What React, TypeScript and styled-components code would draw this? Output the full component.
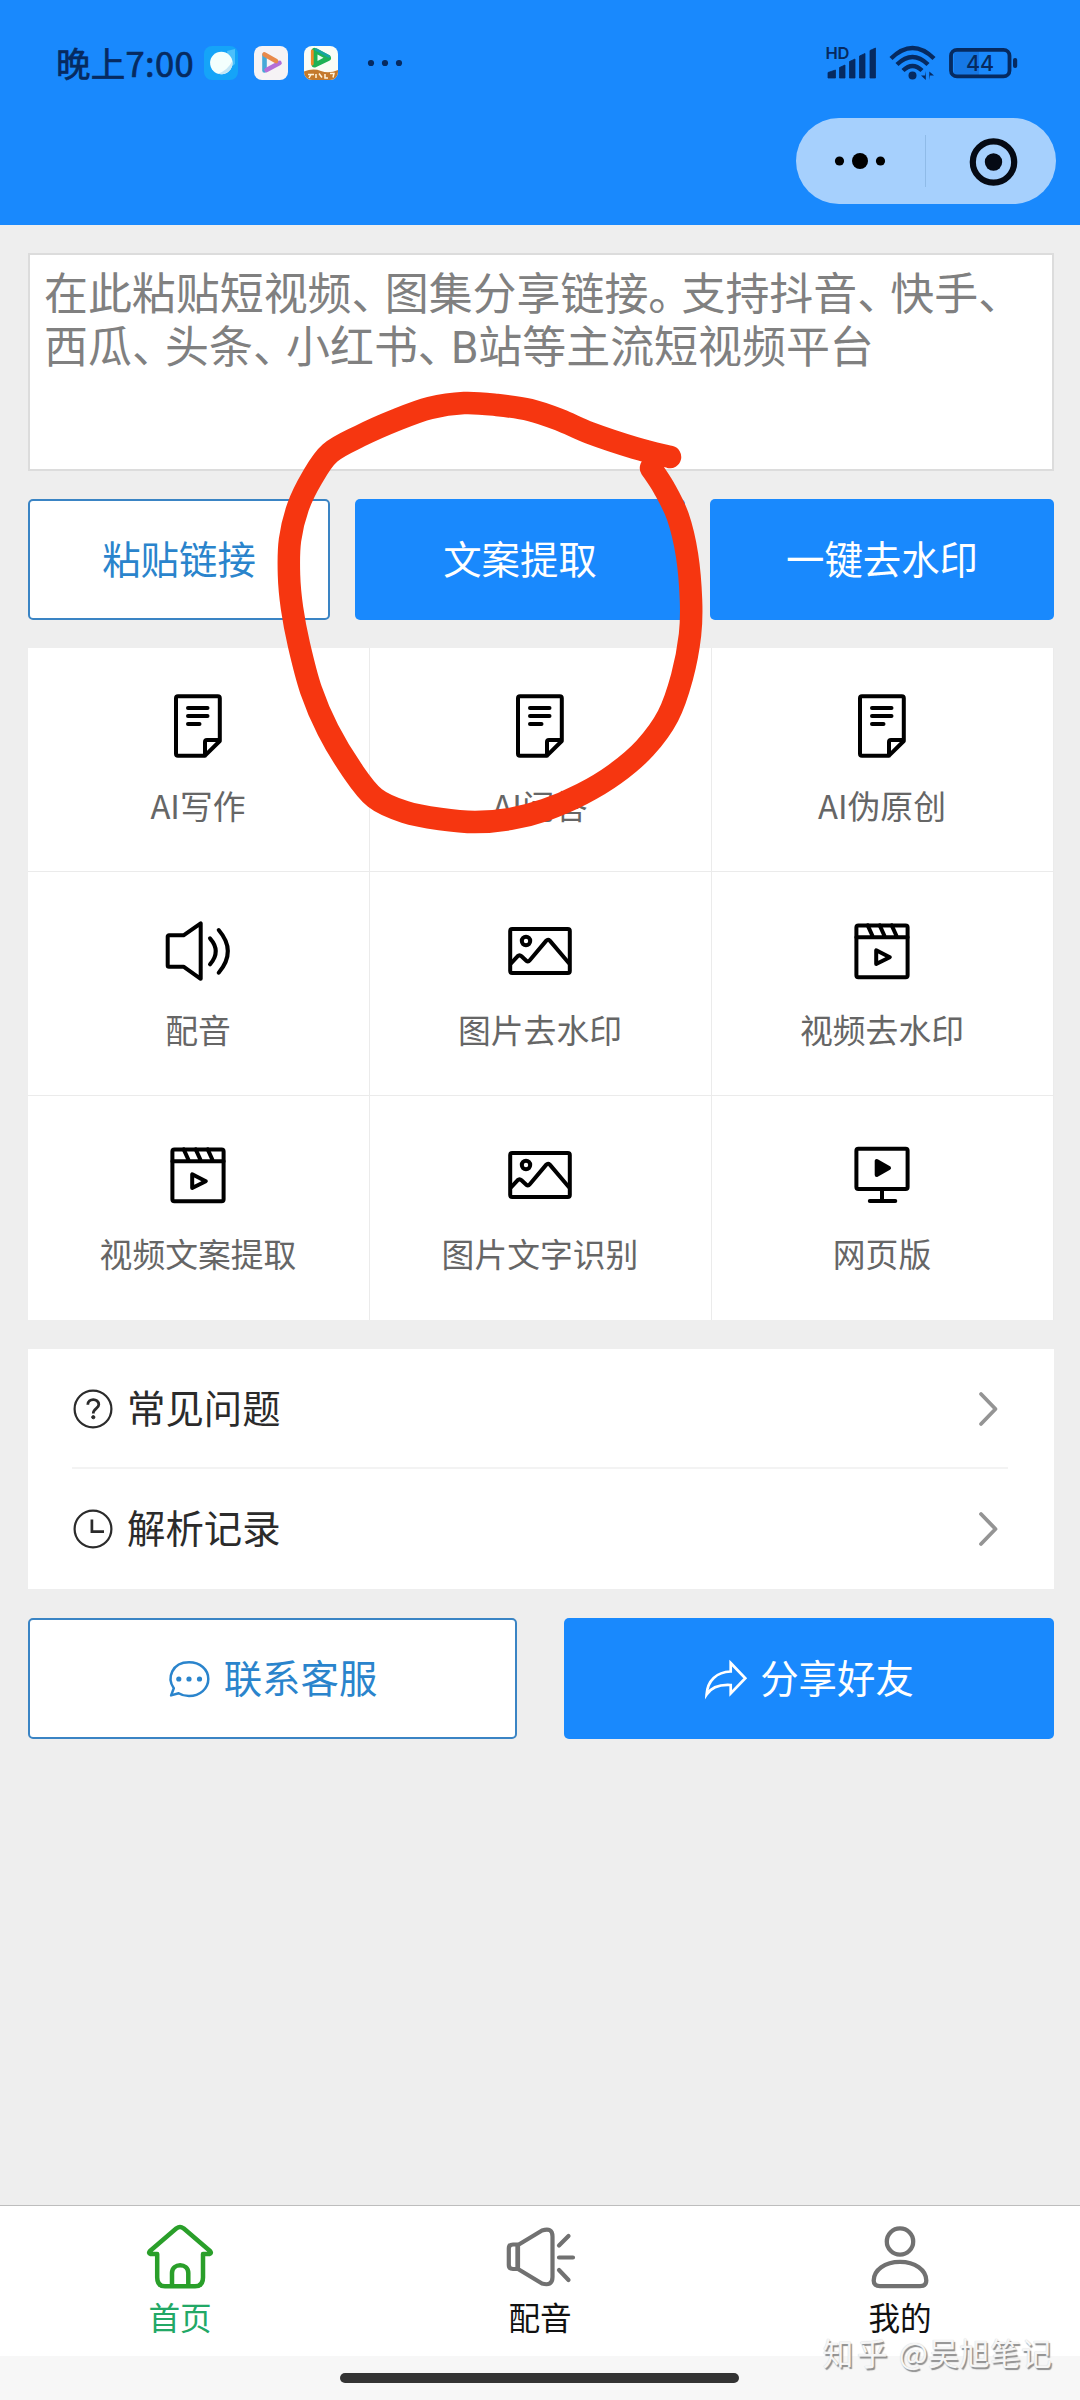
import React from 'react';
import styled, { createGlobalStyle, css } from 'styled-components';

const BLUE = '#1989fd';
const NAVY = '#062a60';

const GlobalStyle = createGlobalStyle`
  * { box-sizing: border-box; }
  body { margin: 0; background: #eeeeee; }
  svg { display: block; flex: none; overflow: visible; }
`;

const Screen = styled.div`
  position: relative;
  width: 1080px;
  height: 2400px;
  display: flex;
  flex-direction: column;
  overflow: hidden;
  background: #eeeeee;
  font-family: 'Noto Sans CJK SC', 'Noto Sans', sans-serif;
`;

const Header = styled.header`
  height: 225px;
  flex: none;
  background: ${BLUE};
  display: flex;
  flex-direction: column;
`;

const StatusBar = styled.div`
  height: 118px;
  padding: 40px 61px 0 56px;
  display: flex;
  align-items: flex-start;
  justify-content: space-between;
  color: ${NAVY};
`;

const StatusGroup = styled.div<{ $gap: number }>`
  display: flex;
  align-items: center;
  height: 46px;
  gap: ${(p) => p.$gap}px;
`;

const Clock = styled.span`
  width: 148px;
  margin: -3px -16px 0 0;
  font-size: 34.5px;
  line-height: 46px;
  letter-spacing: 0.3px;
  -webkit-text-stroke: 0.7px ${NAVY};
  white-space: nowrap;
`;

const Overflow = styled.div`
  margin-left: 13px;
`;

const Capsule = styled.div`
  align-self: flex-end;
  width: 260px;
  height: 86px;
  margin-right: 24.5px;
  border-radius: 43px;
  background: #a6d0fd;
  display: flex;
  align-items: center;
`;

const CapsuleHalf = styled.div`
  flex: 1;
  display: flex;
  justify-content: center;
`;

const CapsuleRule = styled.div`
  width: 1px;
  height: 52px;
  background: #8fbbe8;
`;

const Main = styled.main`
  flex: 1;
  padding: 28px 26px 0 28px;
  display: flex;
  flex-direction: column;
`;

const LinkInput = styled.div`
  height: 218px;
  padding: 14px 14px 0;
  border: 2px solid #dcdcdc;
  background: #fff;
  color: #808080;
  font-family: Roboto, 'Noto Sans CJK SC', sans-serif;
  font-size: 43.95px;
  line-height: 53.3px;
  white-space: nowrap;
`;

const Punct = styled.span`
  letter-spacing: -10.8px;
`;

const ButtonRow = styled.div<{ $gap: number; $top: number }>`
  display: flex;
  gap: ${(p) => p.$gap}px;
  margin-top: ${(p) => p.$top}px;
`;

const Button = styled.button<{ $filled?: boolean; $width: number }>`
  width: ${(p) => p.$width}px;
  height: 121px;
  padding: 0;
  display: flex;
  align-items: center;
  justify-content: center;
  gap: 14px;
  border-radius: 5px;
  font: inherit;
  font-size: 38.4px;
  ${(p) =>
    p.$filled
      ? css`
          border: 0;
          background: ${BLUE};
          color: #fff;
        `
      : css`
          border: 2px solid #3a84c4;
          background: #fff;
          color: #2a84cc;
        `}
`;

const ButtonText = styled.span`
  margin-top: -6px;
`;

const Grid = styled.div`
  margin-top: 28px;
  display: grid;
  grid-template-columns: repeat(3, 342px);
  grid-auto-rows: 224px;
  background: #fff;
`;

const Cell = styled.div`
  display: flex;
  flex-direction: column;
  align-items: center;
  padding: 45px 1px 0 0;
  border-right: 1px solid #ebebeb;
  border-bottom: 1px solid #ebebeb;
  &:nth-child(n + 7) { border-bottom: 0; }
`;

const CellLabel = styled.span`
  margin-top: 24px;
  font-size: 32.8px;
  line-height: 44px;
  color: #666;
`;

const List = styled.div`
  margin-top: 29px;
  padding: 0 46px 0 44px;
  background: #fff;
`;

const ListRow = styled.div`
  height: 120px;
  padding: 1px 10px 0 1px;
  display: flex;
  align-items: center;
  border-bottom: 2px solid #f3f3f3;
  &:last-child { border-bottom-color: #fff; }
`;

const ListLabel = styled.span`
  flex: 1;
  margin: -5px 0 0 14px;
  font-size: 38.4px;
  line-height: 50px;
  color: #2b2b2b;
`;

const TabBar = styled.nav`
  height: 151px;
  flex: none;
  display: flex;
  background: #fff;
  border-top: 1px solid #bdbdbd;
`;

const Tab = styled.div<{ $active?: boolean }>`
  flex: 1;
  display: flex;
  flex-direction: column;
  align-items: center;
  padding-top: 16px;
  font-size: 31.6px;
  line-height: 42px;
  color: ${(p) => (p.$active ? '#22a866' : '#111')};
`;

const TabLabel = styled.span`
  margin-top: 3px;
`;

const GestureArea = styled.footer`
  height: 44px;
  flex: none;
  padding: 17px 1px 0 0;
  background: #f7f7f7;
  display: flex;
  justify-content: center;
`;

const GestureBar = styled.div`
  width: 399px;
  height: 10px;
  border-radius: 5px;
  background: #333;
`;

const Watermark = styled.div`
  position: absolute;
  right: 28px;
  bottom: 26px;
  font-size: 30.8px;
  line-height: 44px;
  color: #f6f6f6;
  text-shadow: 1.5px 1.5px 1px #8d8d8d, 0 0 1px #ccc;
  white-space: nowrap;
`;

const SiteName = styled.span`
  letter-spacing: 3.3px;
`;

const Handle = styled.span`
  margin-left: 1px;
  letter-spacing: 0.2px;
`;

const Marker = styled.svg`
  position: absolute;
  left: 0;
  top: 0;
  pointer-events: none;
`;

type Kind = 'note' | 'sound' | 'picture' | 'clapper' | 'monitor';

const CellIcon = ({ kind }: { kind: Kind }) => (
  <svg width="66" height="66" viewBox="0 0 66 66" fill="none" stroke="#000" strokeWidth="4" strokeLinecap="round" strokeLinejoin="round">
    {kind === 'note' && (
      <>
        <path d="M40 62.7H13a2 2 0 0 1-2-2V5.2a2 2 0 0 1 2-2H52.8a2 2 0 0 1 2 2V48L40 62.7V49a2 2 0 0 1 2-2H54.8" />
        <path d="M23 15H42.5M23 23H42.5M23 31H34.5" />
      </>
    )}
    {kind === 'sound' && (
      <>
        <path d="M4 18.3H18.5L35.7 6.3V61.8L18.5 49.7H4a1.3 1.3 0 0 1-1.3-1.3V19.6A1.3 1.3 0 0 1 4 18.3Z" />
        <path d="M45 21.3Q56.5 34.3 45 47.3M53.7 13Q72 34.3 53.7 55.7" />
      </>
    )}
    {kind === 'picture' && (
      <>
        <rect x="3.2" y="12.1" width="59.6" height="43.8" rx="2" />
        <circle cx="19" cy="24" r="4.2" />
        <path d="M4 46.3L10.5 39.3Q12.5 37.4 14.5 39.3L19.3 43.8Q21.2 45.2 22.8 43.3L39.3 23.6Q41 21.8 42.8 23.6L62 46.3" />
      </>
    )}
    {kind === 'clapper' && (
      <>
        <rect x="7.4" y="8.4" width="51.2" height="51.8" rx="2" />
        <path d="M7.4 20.3H58.6M18.7 8.4L24 20M30.7 8.4L36 20M42.7 8.4L48 20M27.2 33.3V47L40.8 40.2Z" />
      </>
    )}
    {kind === 'monitor' && (
      <>
        <rect x="7.4" y="7.8" width="51.2" height="40.2" rx="2" />
        <path d="M33 48V60M20.8 60H46.3" />
        <path d="M27.7 20V34L40 27Z" fill="#000" />
      </>
    )}
  </svg>
);

const HelpIcon = () => (
  <svg width="40" height="40" viewBox="0 0 40 40" fill="none" stroke="#2b2b2b" strokeWidth="2.2">
    <circle cx="20" cy="20" r="18.4" />
    <path d="M14.8 15.8C14.8 8.9 25.8 9 25.8 15.6C25.8 19.6 20.3 19.4 20.3 24.6" strokeWidth="2.8" />
    <circle cx="20.3" cy="28.2" r="1.6" fill="#2b2b2b" strokeWidth="1" />
  </svg>
);

const ClockIcon = () => (
  <svg width="40" height="40" viewBox="0 0 40 40" fill="none" stroke="#2b2b2b" strokeWidth="2.2">
    <circle cx="20" cy="20" r="18.4" />
    <path d="M18.9 10.5V22.7H31" strokeWidth="2.7" />
  </svg>
);

const Chevron = () => (
  <svg width="20" height="36" viewBox="0 0 20 36" fill="none" stroke="#949494" strokeWidth="3.8" strokeLinecap="round" strokeLinejoin="round">
    <path d="M3 3L17.500 18L3 33" />
  </svg>
);

const ChatIcon = () => (
  <svg width="42" height="38" viewBox="0 0 42 38" fill="none" stroke="#2a84cc" strokeWidth="2.5" strokeLinejoin="round">
    <path d="M3.1 35.4L5.8 28.2C-1.5 18 4 2.2 21 2.2C32 2.2 40.3 9.4 40.3 19C40.3 28.5 32 36 21 36C17 36 13.500 35 10.600 33.200Z" />
    <g fill="#2a84cc" stroke="none">
      <circle cx="10.800" cy="19" r="2.600" />
      <circle cx="21" cy="19" r="2.600" />
      <circle cx="31.500" cy="19" r="2.600" />
    </g>
  </svg>
);

const ShareIcon = () => (
  <svg width="42" height="38" viewBox="0 0 42 38" fill="none" stroke="#fff" strokeWidth="2.700">
    <path d="M26.700 3L41.300 18.200L26.700 33.500V25C15 24.300 7.500 27 2.600 34.500C3.500 20.500 12.500 12 26.700 11.500Z" />
  </svg>
);

const BrowserApp = () => (
  <svg width="34" height="34" viewBox="0 0 34 34">
    <rect width="34" height="34" rx="8" fill="#15a4f8" />
    <path d="M23 5L31 3V18L26 22Z" fill="#4cc0fb" />
    <circle cx="17.300" cy="17" r="11.200" fill="#f3fffd" />
    <path d="M28.300 15A11.200 11.200 0 0 1 14 27.700Q24 24 28.300 15Z" fill="#c4e6f5" />
  </svg>
);

const VideoApp = () => (
  <svg width="34" height="34" viewBox="0 0 34 34" fill="none" strokeWidth="4.600" strokeLinejoin="round" strokeLinecap="round">
    <rect width="34" height="34" rx="8" fill="#f6f3f5" />
    <path d="M10.500 9V24.500" stroke="#45a9d8" />
    <path d="M12.500 24L25.500 17" stroke="#b46ed8" />
    <path d="M10.500 8.500L22 15" stroke="#e8894a" />
  </svg>
);

const TheaterApp = () => (
  <svg width="34" height="34" viewBox="0 0 34 34">
    <rect width="34" height="34" rx="8" fill="#fbfdf6" />
    <path d="M0 25.500Q9 22 17 25T34 24V26A8 8 0 0 1 26 34H8A8 8 0 0 1 0 26Z" fill="#c47a2c" />
    <path d="M10.500 5V18.500L24 12Z" fill="#1fb254" stroke="#1fb254" strokeWidth="6" strokeLinejoin="round" />
    <path d="M8.300 5V18" stroke="#f08a28" strokeWidth="2.800" strokeLinecap="round" />
    <path d="M12 3.500L25 10.500" stroke="#17a5a0" strokeWidth="2.600" strokeLinecap="round" />
    <path d="M13.500 8.500V15L19.500 11.800Z" fill="#eafff0" />
    <path d="M4 28.500H10M7 28.500L5 32M12 28V32M15 27.500L18 31.500M21 28V32H24M26 27.500H30L29 31.500" stroke="#fff3d8" strokeWidth="1.500" fill="none" />
  </svg>
);

const MoreDots = () => (
  <svg width="36" height="8" viewBox="0 0 36 8" fill={NAVY}>
    <circle cx="4" cy="4" r="3.100" />
    <circle cx="18" cy="4" r="3.100" />
    <circle cx="32" cy="4" r="3.100" />
  </svg>
);

const SignalIcon = () => (
  <svg width="52" height="36" viewBox="0 0 52 36" fill={NAVY}>
    <text x="0.500" y="14" fontSize="16.500" fontWeight="600" fontFamily="Inter, sans-serif" textLength="24">HD</text>
    <path d="M3 27.500L10.500 25V33H3ZM14.500 22.500L20 20V33H14.500ZM24.500 16.500L30 14V33H24.500ZM34.500 11L40 8.500V33H34.500ZM45 5.500L50.500 3V33H45Z" stroke={NAVY} strokeWidth="0.800" strokeLinejoin="round" />
  </svg>
);

const WifiIcon = () => (
  <svg width="48" height="36" viewBox="0 0 48 36" fill="none" stroke={NAVY} strokeWidth="4.400">
    <path d="M2 13.500Q23.500 -7.500 45 13.500" />
    <path d="M8 19.500Q23.500 4.500 39 19.500" />
    <path d="M14 25.500Q23.500 16.500 33 25.500" />
    <circle cx="23.500" cy="30.500" r="4" fill={NAVY} stroke="none" />
    <path d="M36.800 26V35L32 30.500H36M40.300 35V26.500L45 30.500H41" stroke="none" fill={NAVY} />
  </svg>
);

const BatteryIcon = () => (
  <svg width="70" height="34" viewBox="0 0 70 34" fill="none">
    <path d="M5 4H30V30H5Z" fill="#1678e6" />
    <rect x="2" y="3.800" width="58.500" height="26.600" rx="6" stroke={NAVY} strokeWidth="3.800" />
    <rect x="64" y="12" width="4.200" height="10" rx="2" fill={NAVY} />
    <text x="31" y="24.600" textAnchor="middle" fontSize="21.500" fontWeight="500" fontFamily="Inter, sans-serif" fill={NAVY}>44</text>
  </svg>
);

const HomeIcon = () => (
  <svg width="70" height="70" viewBox="0 0 70 70" fill="none" stroke="#2a9f2a" strokeWidth="4.500" strokeLinejoin="round" strokeLinecap="round">
    <path d="M12.200 32H5.500Q3 31.500 5 29L31.500 6.300Q35 3.800 38.500 6.300L65 29Q67 31.500 64.500 32H58V55.500Q58 64.300 50 64.300H20Q12.200 64.300 12.200 55.500Z" />
    <path d="M27 63V51C27 40.500 43.300 40.500 43.300 51V63" />
  </svg>
);

const VoiceIcon = () => (
  <svg width="70" height="70" viewBox="0 0 70 70" fill="none" stroke="#717171" strokeWidth="4.200" strokeLinecap="round" strokeLinejoin="round">
    <path d="M12.500 22.500H8Q3.800 22.500 3.800 26.500V43Q3.800 47 8 47H12.500Z" />
    <path d="M13 23L37 8.500Q47.500 5 47.500 14.500V55Q47.500 64.500 37 61.500L13 47Z" />
    <path d="M54 23.500L63.500 14M54 35.500H68M54 48L63.500 58" />
  </svg>
);

const UserIcon = () => (
  <svg width="70" height="70" viewBox="0 0 70 70" fill="none" stroke="#717171" strokeWidth="4.300">
    <circle cx="35" cy="19.500" r="13.200" />
    <path d="M8.700 58.500C8.700 48 20 39.800 35 39.800S61.300 48 61.300 58.500Q61.300 64.200 55 64.200H15Q8.700 64.200 8.700 58.500Z" />
  </svg>
);

const MARK_POINTS: [number, number][] = [
  [670, 457], [635, 448], [590, 433], [560, 420], [530, 410], [497, 405], [464, 403], [430, 408],
  [396, 420], [360, 436], [330, 453], [312, 478], [298, 507], [290, 540], [289, 575],
  [292, 608], [299, 645], [311, 690], [328, 730], [352, 770], [375, 798], [405, 812],
  [440, 819], [475, 822], [510, 819], [545, 810], [582, 794], [615, 774], [645, 748],
  [668, 716], [682, 677], [690, 635], [691, 600], [687, 555], [678, 517], [664, 488], [651, 468],
];

// Catmull-Rom interpolation through the stroke's points.
const smoothPath = (pts: [number, number][]) =>
  pts.reduce((d, p, i) => {
    if (i === 0) return `M${p[0]} ${p[1]}`;
    const a = pts[Math.max(i - 2, 0)];
    const b = pts[i - 1];
    const n = pts[Math.min(i + 1, pts.length - 1)];
    return `${d}C${b[0] + (p[0] - a[0]) / 6} ${b[1] + (p[1] - a[1]) / 6} ${p[0] - (n[0] - b[0]) / 6} ${p[1] - (n[1] - b[1]) / 6} ${p[0]} ${p[1]}`;
  }, '');

const TOOLS: { label: string; kind: Kind }[] = [
  { label: 'AI写作', kind: 'note' },
  { label: 'AI问答', kind: 'note' },
  { label: 'AI伪原创', kind: 'note' },
  { label: '配音', kind: 'sound' },
  { label: '图片去水印', kind: 'picture' },
  { label: '视频去水印', kind: 'clapper' },
  { label: '视频文案提取', kind: 'clapper' },
  { label: '图片文字识别', kind: 'picture' },
  { label: '网页版', kind: 'monitor' },
];

const Placeholder = ({ text }: { text: string }) => (
  <div>
    {text.split(/([、。])/).map((part, i) => (/[、。]/.test(part) ? <Punct key={i}>{part}</Punct> : part))}
  </div>
);

export default function App() {
  return (
    <Screen>
      <GlobalStyle />
      <Header>
        <StatusBar>
          <StatusGroup $gap={16}>
            <Clock>晚上7:00</Clock>
            <BrowserApp />
            <VideoApp />
            <TheaterApp />
            <Overflow>
              <MoreDots />
            </Overflow>
          </StatusGroup>
          <StatusGroup $gap={12}>
            <SignalIcon />
            <WifiIcon />
            <BatteryIcon />
          </StatusGroup>
        </StatusBar>
        <Capsule>
          <CapsuleHalf>
            <svg width="54" height="20" viewBox="0 0 54 20">
              <circle cx="6.500" cy="10" r="4.600" />
              <circle cx="27" cy="10" r="8" />
              <circle cx="47.500" cy="10" r="4.600" />
            </svg>
          </CapsuleHalf>
          <CapsuleRule />
          <CapsuleHalf>
            <svg width="50" height="50" viewBox="0 0 50 50" fill="none">
              <circle cx="27.500" cy="26" r="20.700" stroke="#050a14" strokeWidth="6.200" />
              <circle cx="27.500" cy="26" r="8.700" fill="#050a14" />
            </svg>
          </CapsuleHalf>
        </Capsule>
      </Header>
      <Main>
        <LinkInput>
          <Placeholder text="在此粘贴短视频、图集分享链接。支持抖音、快手、" />
          <Placeholder text="西瓜、头条、小红书、B站等主流短视频平台" />
        </LinkInput>
        <ButtonRow $gap={25} $top={28}>
          <Button $width={302}>
            <ButtonText>粘贴链接</ButtonText>
          </Button>
          <Button $width={330} $filled>
            <ButtonText>文案提取</ButtonText>
          </Button>
          <Button $width={344} $filled>
            <ButtonText>一键去水印</ButtonText>
          </Button>
        </ButtonRow>
        <Grid>
          {TOOLS.map((t) => (
            <Cell key={t.label}>
              <CellIcon kind={t.kind} />
              <CellLabel>{t.label}</CellLabel>
            </Cell>
          ))}
        </Grid>
        <List>
          <ListRow>
            <HelpIcon />
            <ListLabel>常见问题</ListLabel>
            <Chevron />
          </ListRow>
          <ListRow>
            <ClockIcon />
            <ListLabel>解析记录</ListLabel>
            <Chevron />
          </ListRow>
        </List>
        <ButtonRow $gap={47} $top={29}>
          <Button $width={489}>
            <ChatIcon />
            <ButtonText>联系客服</ButtonText>
          </Button>
          <Button $width={490} $filled>
            <ShareIcon />
            <ButtonText>分享好友</ButtonText>
          </Button>
        </ButtonRow>
      </Main>
      <TabBar>
        <Tab $active>
          <HomeIcon />
          <TabLabel>首页</TabLabel>
        </Tab>
        <Tab>
          <VoiceIcon />
          <TabLabel>配音</TabLabel>
        </Tab>
        <Tab>
          <UserIcon />
          <TabLabel>我的</TabLabel>
        </Tab>
      </TabBar>
      <GestureArea>
        <GestureBar />
      </GestureArea>
      <Watermark>
        <SiteName>知乎</SiteName> <Handle>@吴旭笔记</Handle>
      </Watermark>
      <Marker width="1080" height="900" viewBox="0 0 1080 900" fill="none">
        <path d={smoothPath(MARK_POINTS)} stroke="#f63610" strokeWidth="22.500" strokeLinecap="round" strokeLinejoin="round" />
      </Marker>
    </Screen>
  );
}
